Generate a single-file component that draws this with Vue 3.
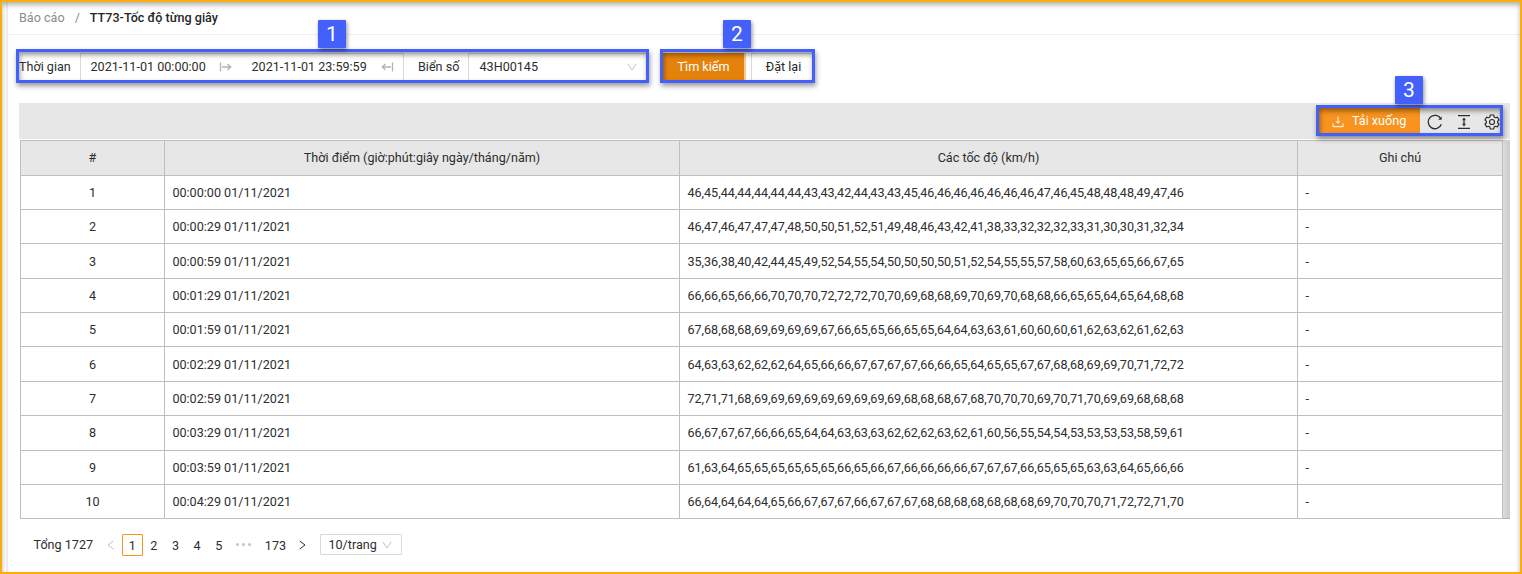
<script setup>
const rows = [
  ['00:00:00', '46,45,44,44,44,44,44,43,43,42,44,43,43,45,46,46,46,46,46,46,46,47,46,45,48,48,48,49,47,46'],
  ['00:00:29', '46,47,46,47,47,47,48,50,50,51,52,51,49,48,46,43,42,41,38,33,32,32,32,33,31,30,30,31,32,34'],
  ['00:00:59', '35,36,38,40,42,44,45,49,52,54,55,54,50,50,50,50,51,52,54,55,55,57,58,60,63,65,65,66,67,65'],
  ['00:01:29', '66,66,65,66,66,70,70,70,72,72,72,70,70,69,68,68,69,70,69,70,68,68,66,65,65,64,65,64,68,68'],
  ['00:01:59', '67,68,68,68,69,69,69,69,67,66,65,65,66,65,65,64,64,63,63,61,60,60,60,61,62,63,62,61,62,63'],
  ['00:02:29', '64,63,63,62,62,62,64,65,66,66,67,67,67,67,66,66,65,64,65,65,67,67,68,68,69,69,70,71,72,72'],
  ['00:02:59', '72,71,71,68,69,69,69,69,69,69,69,69,69,68,68,68,67,68,70,70,70,69,70,71,70,69,69,68,68,68'],
  ['00:03:29', '66,67,67,67,66,66,65,64,64,63,63,63,62,62,62,63,62,61,60,56,55,54,54,53,53,53,53,58,59,61'],
  ['00:03:59', '61,63,64,65,65,65,65,65,65,66,65,66,67,66,66,66,66,67,67,67,66,65,65,65,63,63,64,65,66,66'],
  ['00:04:29', '66,64,64,64,64,65,66,67,67,67,66,67,67,67,68,68,68,68,68,68,68,69,70,70,70,71,72,72,71,70'],
]
const headings = ['#', 'Thời điểm (giờ:phút:giây ngày/tháng/năm)', 'Các tốc độ (km/h)', 'Ghi chú']
</script>

<template>
  <div class="page">
    <header class="breadcrumb">
      <span class="crumb">Báo cáo</span><span class="slash">/</span><strong>TT73-Tốc độ từng giây</strong>
    </header>

    <div class="filters">
      <span class="label time-label">Thời gian</span>
      <div class="picker">
        <span class="date">2021-11-01 00:00:00</span>
        <svg class="arrow" viewBox="0 0 13 10"><path d="M1.5 0.5v9M3 5h8.5M8.5 2L11.7 5L8.5 8" /></svg>
        <span class="date end">2021-11-01 23:59:59</span>
        <svg class="arrow last" viewBox="0 0 13 10"><path d="M11.5 0.5v9M10 5H1.5M4.5 2L1.3 5L4.5 8" /></svg>
      </div>
      <span class="label plate-label">Biển số</span>
      <div class="select">
        <span>43H00145</span>
        <svg class="chevron" viewBox="0 0 10 8"><path d="M0.8 0.8L5 7L9.2 0.8" /></svg>
      </div>
      <button class="btn primary">Tìm kiếm</button>
      <button class="btn reset">Đặt lại</button>
    </div>

    <section class="panel">
      <div class="toolbar">
        <button class="download">
          <svg viewBox="0 0 12 12"><path d="M6 0.5v6.6M4 5.2L6 7.3L8 5.2M1 7.5v3.2h10V7.5" /></svg>
          <span>Tải xuống</span>
        </button>
        <svg class="tool reload" viewBox="0 0 16 16"><path d="M13.9 4.9A6.7 6.7 0 1 0 14.3 10.2" /><path d="M14.6 2.4v3.3h-3.4z" class="solid" /></svg>
        <svg class="tool height" viewBox="0 0 14 14"><path d="M1 .6h12M1 13.4h12M7 4v6" /><path d="M7 2.5l2 2.7H5zM7 11.5l2-2.7H5z" class="solid" /></svg>
        <svg class="tool gear" viewBox="0 0 16 16"><path d="M6.3 1h3.4l.5 2 1.2.7 2-.6L15 6l-1.4 1.4v1.3L15 10l-1.6 2.9-2-.6-1.2.7-.5 2H6.3l-.5-2-1.2-.7-2 .6L1 10l1.4-1.3V7.4L1 6l1.6-2.9 2 .6L5.8 3z" /><circle cx="8" cy="8" r="2.5" /></svg>
      </div>
      <div class="table-wrap">
        <div class="table">
          <div class="row head">
            <div v-for="h in headings" :key="h" class="cell">{{ h }}</div>
          </div>
          <div class="body">
            <div v-for="(r, i) in rows" :key="r[0]" class="row">
              <div class="cell index">{{ i + 1 }}</div>
              <div class="cell">{{ r[0] }} 01/11/2021</div>
              <div class="cell">{{ r[1] }}</div>
              <div class="cell">-</div>
            </div>
          </div>
        </div>
        <div class="gutter"></div>
      </div>
    </section>

    <nav class="pagination">
      <span class="total">Tổng 1727</span>
      <svg class="nav prev" viewBox="0 0 7 10"><path d="M6.3 1L1 5l5.3 4" /></svg>
      <span class="num active">1</span>
      <span v-for="n in [2, 3, 4, 5]" :key="n" class="num">{{ n }}</span>
      <span class="dots"><i></i><i></i><i></i></span>
      <span class="num wide">173</span>
      <svg class="nav next" viewBox="0 0 7 10"><path d="M.7 1L6 5L.7 9" /></svg>
      <div class="size">
        <span>10/trang</span>
        <svg class="chevron" viewBox="0 0 10 8"><path d="M0.8 0.8L5 7L9.2 0.8" /></svg>
      </div>
    </nav>

    <div class="mark m1"></div><div class="badge b1">1</div>
    <div class="mark m2"></div><div class="badge b2">2</div>
    <div class="mark m3"></div><div class="badge b3">3</div>
    <div class="frame"></div>
  </div>
</template>

<style>
body { margin: 0; background: #fff; }
</style>

<style scoped>
.page {
  position: relative; box-sizing: border-box; width: 1522px; height: 574px; overflow: hidden;
  padding-left: 7px; background: #fff; color: #2e2e2e;
  font-family: Roboto, sans-serif; font-size: 12.6px;
}
.page::before { content: ""; position: absolute; left: 6px; top: 2px; width: 2px; height: 570px; background: #ededed; }
.page * { box-sizing: border-box; }
svg { display: block; fill: none; stroke: currentColor; flex: none; }
button { font: inherit; border: 0; margin: 0; padding: 0; }
.breadcrumb { height: 35px; margin-left: 1px; padding-left: 11px; border-bottom: 1px solid #f0f0f0; line-height: 35px; white-space: nowrap; }
.crumb, .slash { color: #8c8c8c; }
.slash { margin: 0 10px; }
.breadcrumb strong { font-weight: 500; color: #262626; }

.filters { display: flex; height: 29px; margin: 18px 0 0 12px; align-items: center; white-space: nowrap; line-height: 26px; }
.label { height: 28px; }
.time-label { width: 61px; }
.picker { display: flex; align-items: center; width: 324px; height: 29px; border: 1px solid #d9d9d9; padding: 0 0 1px 9.5px; }
.date { width: 128px; }
.date.end { width: 128px; margin-left: 20px; }
.arrow { width: 13px; height: 10px; color: #b3b3b3; stroke-width: 1.3; }
.arrow.last { margin-left: 1px; }
.plate-label { width: 64px; padding-left: 14px; }
.select { display: flex; align-items: center; justify-content: space-between; width: 179px; height: 29px; border: 1px solid #d9d9d9; padding: 0 9px 1px 10.5px; }
.chevron { width: 10px; height: 8px; color: #bfbfbf; }
.btn { height: 29px; line-height: 27px; padding-bottom: 2px; }
.primary { width: 84px; margin-left: 15px; background: #e5820b; color: #fff; border-right: 2px solid #f6c999; padding-left: 1px; }
.reset { width: 63px; margin-left: 5px; background: #fff; border: 1px solid #d9d9d9; color: #262626; padding-left: 2px; line-height: 25px; }

.panel { width: 1491px; margin: 21px 0 0 12px; }
.toolbar { display: flex; align-items: center; height: 36px; background: #e7e7e7; justify-content: flex-end; padding-right: 10px; }
.download { display: flex; align-items: center; width: 103px; height: 29px; margin-top: -2px; background: #f7931e; color: #fff; padding-left: 15px; }
.download svg { width: 12px; height: 12px; margin-top: 3px; }
.download span { margin-left: 8px; }
.tool { margin-top: 2px; }
.reload { width: 16px; height: 16px; margin-left: 7px; stroke-width: 1.3; }
.height { width: 14px; height: 14px; margin-left: 14px; stroke-width: 1.2; }
.gear { width: 16px; height: 16px; margin-left: 13px; stroke-width: 1.2; }
.solid { fill: currentColor; stroke: none; }
.table-wrap { display: flex; margin: 1px 0 0 1px; }
.table { width: 1483px; border: 1px solid #bfbfbf; border-bottom: 0; }
.row { display: grid; grid-template-columns: 144px 515px 618px 204px; height: 34px; border-bottom: 1px solid #bfbfbf; }
.body .row:nth-child(3), .body .row:nth-child(6), .body .row:nth-child(8) { height: 35px; }
.cell { display: flex; align-items: center; padding-left: 7.4px; border-right: 1px solid #bfbfbf; white-space: nowrap; }
.cell:last-child { border-right: 0; }
.index, .head .cell { justify-content: center; padding-left: 0; }
.head { height: 35px; background: #e7e7e7; }
.head .cell, .body .row:nth-child(8) .cell { padding-bottom: 2px; }
.gutter { width: 7px; background: linear-gradient(90deg, #dcdcdc, #cacaca); border-bottom: 1px solid #b4b4b4; }

.pagination { display: flex; align-items: center; height: 22px; margin: 15px 0 0 26.5px; line-height: 20px; }
.total { width: 73px; }
.nav { width: 7px; height: 10px; }
.prev { color: #bfbfbf; }
.num { width: 21.6px; height: 22px; text-align: center; line-height: 23px; flex: none; }
.num.active { margin-left: 8px; border: 1px solid #f7931e; border-radius: 1px; line-height: 21px; }
.dots { display: flex; gap: 3px; margin: -2px 0 0 7px; }
.dots i { width: 3px; height: 3px; border-radius: 50%; background: #c4c4c4; }
.num.wide { margin-left: 12px; width: 24px; }
.next { margin-left: 12px; }
.size { display: flex; align-items: center; justify-content: space-between; width: 82px; height: 21px; margin: -1px 0 0 14px; border: 1px solid #d9d9d9; border-radius: 1px; padding: 0 9px 0 7px; }

.mark { position: absolute; border: 3px solid #4360fb; box-shadow: 1px 3px 5px rgba(0,0,0,.4), inset 1px 3px 5px rgba(0,0,0,.4); }
.m1 { left: 16px; top: 49px; width: 633px; height: 34px; }
.m2 { left: 660px; top: 49px; width: 155px; height: 34px; }
.m3 { left: 1316px; top: 105px; width: 187px; height: 31px; }
.badge { position: absolute; width: 28px; height: 28px; background: #4360fb; color: #fff; font-size: 21px; line-height: 29px; text-align: center; box-shadow: 1px 2px 4px rgba(0,0,0,.45); border-radius: 1px; }
.b1 { left: 318px; top: 20px; }
.b2 { left: 723px; top: 20px; }
.b3 { left: 1395px; top: 76px; }
.frame { position: absolute; inset: 0; border: 2px solid #fbae0b; box-shadow: inset 0 3px 5px rgba(0,0,0,.3); pointer-events: none; }
</style>
